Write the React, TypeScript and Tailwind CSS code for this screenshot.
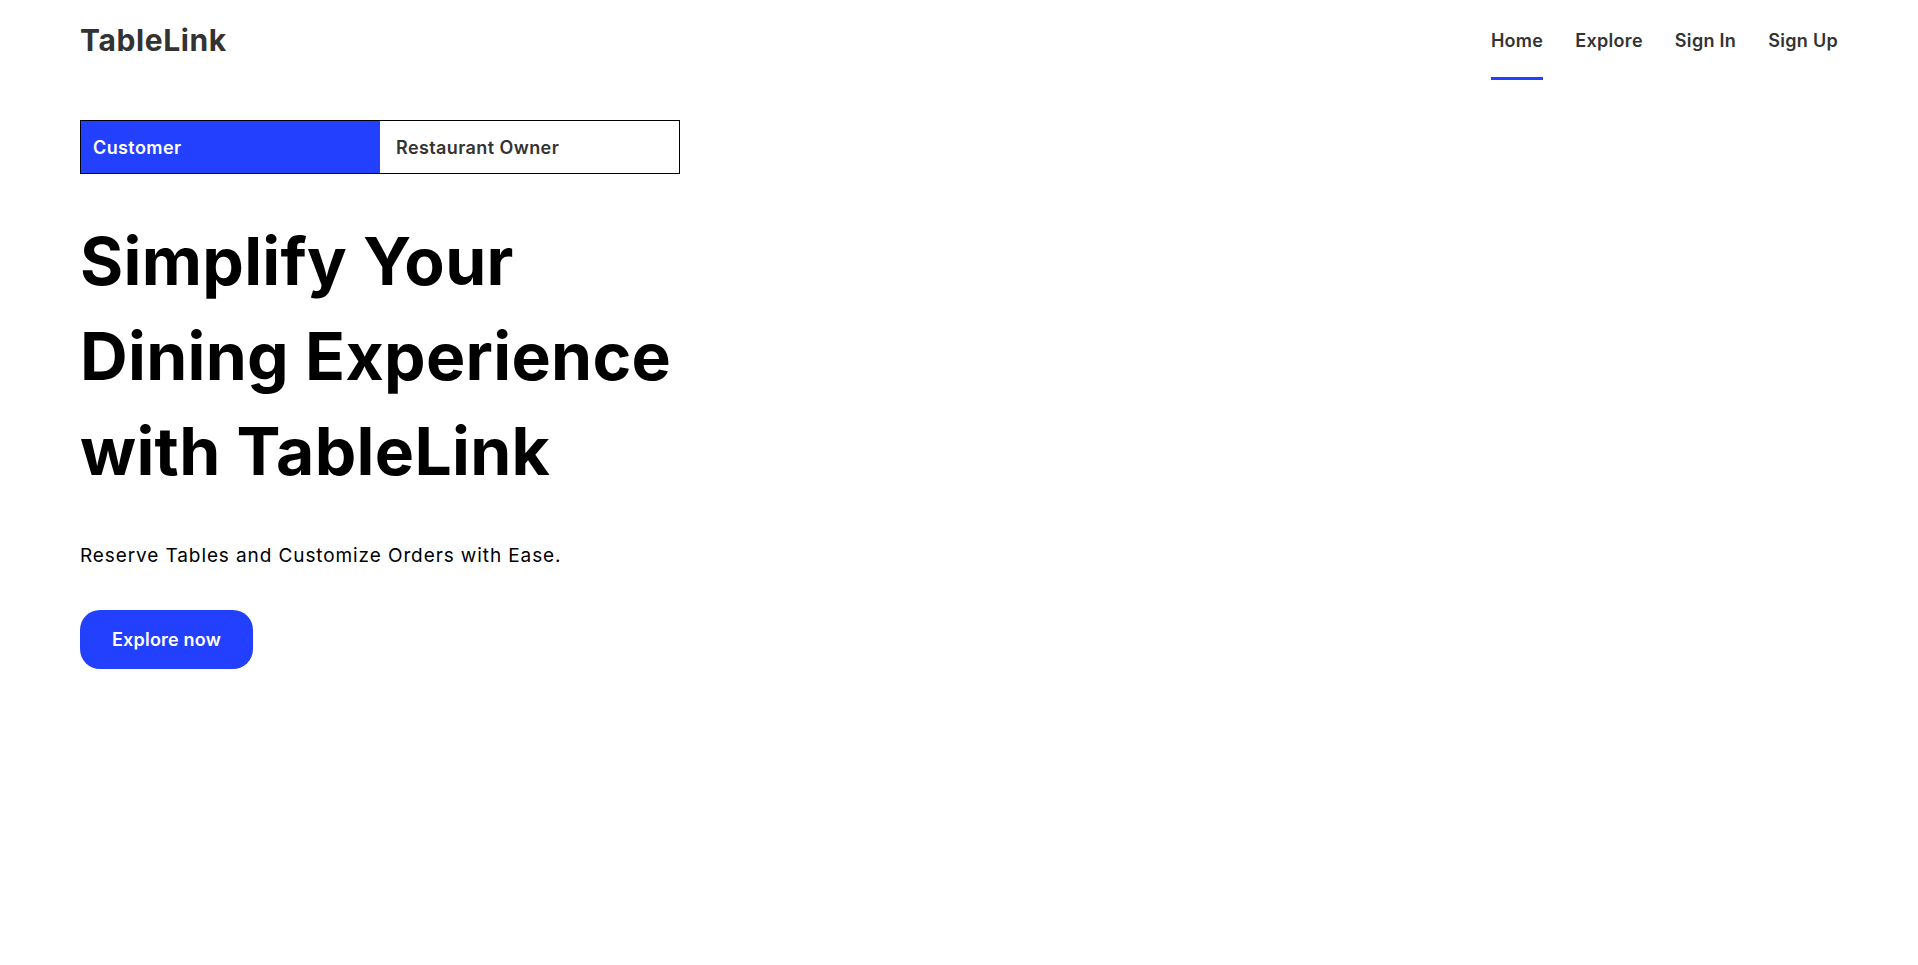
export default function App() {
  return (
    <div className="min-h-screen bg-white font-['Inter',sans-serif] text-[#333]">
      {/* Top bar */}
      <header className="flex h-[80px] items-center justify-between px-20">
        <a href="#" className="text-[30px] font-bold tracking-[0.6px] text-[#333]">
          TableLink
        </a>
        <nav className="flex h-full items-stretch gap-8 text-[18px] font-semibold tracking-[0.3px]">
          <a href="#" className="flex items-center border-y-[3px] border-t-transparent border-b-[#2340ff]">
            Home
          </a>
          <a href="#" className="flex items-center">Explore</a>
          <a href="#" className="flex items-center">Sign In</a>
          <a href="#" className="flex items-center">Sign Up</a>
        </nav>
      </header>

      <main className="px-20 pt-10">
        {/* Role switch */}
        <div className="grid h-[54px] w-[600px] grid-cols-2 border border-black text-[18px] font-semibold tracking-[0.4px]">
          <button className="flex items-center bg-[#2340ff] px-3 text-white">Customer</button>
          <button className="flex items-center px-4 text-[#333]">Restaurant Owner</button>
        </div>

        {/* Hero */}
        <h1 className="mt-10 text-[66px] font-bold leading-[95px] tracking-[0.3px] text-black">
          Simplify Your
          <br />
          Dining Experience
          <br />
          with TableLink
        </h1>
        <p className="mt-[43px] text-[19px] leading-[27px] tracking-[0.9px] text-black">
          Reserve Tables and Customize Orders with Ease.
        </p>
        <button className="mt-[41px] h-[59px] w-[173px] rounded-[20px] bg-[#2340ff] text-[18px] font-semibold tracking-[0.2px] text-white">
          Explore now
        </button>
      </main>
    </div>
  );
}
